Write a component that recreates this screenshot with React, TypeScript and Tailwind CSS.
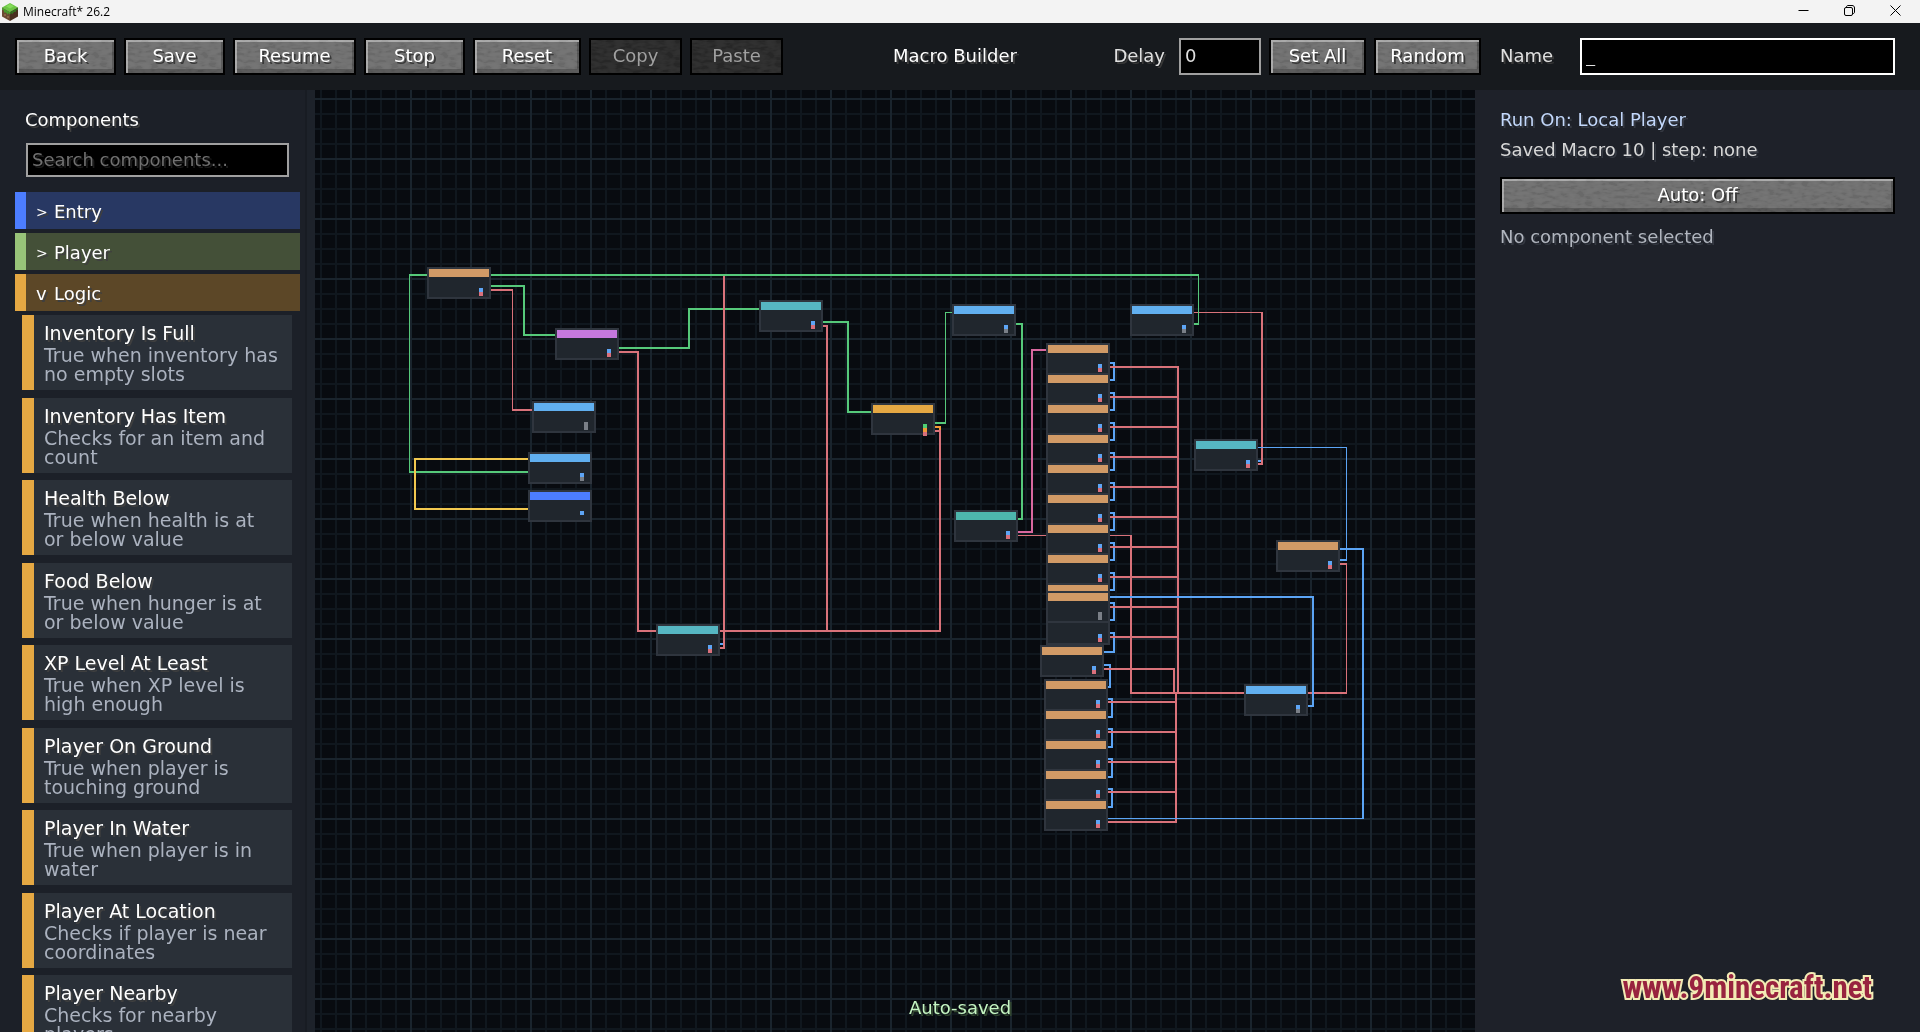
import { useState } from "react";
import clsx from "clsx";

const COLORS = {
  orange: "#d19a66",
  purple: "#c678dd",
  blue: "#61afef",
  entry: "#4c7dff",
  teal: "#56b6c2",
  logic: "#e5a843",
  mint: "#4db6ac",
  portBlue: "#5ea5f5",
  portRed: "#d9707c",
  portGray: "#7a7f87",
  portGreen: "#4fcf74",
  portOrange: "#f29b38",
};

const WIRES = {
  green: "#56c97a",
  red: "#d9727a",
  blue: "#5ba4f5",
  yellow: "#f2c84f",
  pink: "#d9689f",
  orange: "#f29b38",
};

// world coordinates of the canvas' top left corner
const ORIGIN = { x: 315, y: 90 };

interface GraphNode {
  x: number;
  y: number;
  color: string;
  ports: string[];
}

const { portBlue, portRed, portGray, portGreen, portOrange } = COLORS;

const stack = (x: number, y: number, count: number): GraphNode[] =>
  Array.from({ length: count }, (_, i) => ({
    x,
    y: y + i * 30,
    color: COLORS.orange,
    ports: [portBlue, portRed],
  }));

const nodes: GraphNode[] = [
  { x: 427, y: 267, color: COLORS.orange, ports: [portBlue, portRed] },
  { x: 555, y: 328, color: COLORS.purple, ports: [portBlue, portRed] },
  { x: 532, y: 401, color: COLORS.blue, ports: [portGray, portGray] },
  { x: 528, y: 452, color: COLORS.blue, ports: [portBlue, portGray] },
  { x: 528, y: 490, color: COLORS.entry, ports: [portBlue] },
  { x: 759, y: 300, color: COLORS.teal, ports: [portBlue, portRed] },
  { x: 871, y: 403, color: COLORS.logic, ports: [portGreen, portOrange, portRed] },
  { x: 952, y: 304, color: COLORS.blue, ports: [portBlue, portGray] },
  { x: 954, y: 510, color: COLORS.mint, ports: [portBlue, portRed] },
  { x: 656, y: 624, color: COLORS.teal, ports: [portBlue, portRed] },
  ...stack(1046, 343, 10),
  { x: 1046, y: 591, color: COLORS.orange, ports: [portGray, portGray] },
  { x: 1040, y: 645, color: COLORS.orange, ports: [portBlue, portRed] },
  ...stack(1044, 679, 5),
  { x: 1130, y: 304, color: COLORS.blue, ports: [portBlue, portGray] },
  { x: 1194, y: 439, color: COLORS.teal, ports: [portBlue, portRed] },
  { x: 1276, y: 540, color: COLORS.orange, ports: [portBlue, portRed] },
  { x: 1244, y: 684, color: COLORS.blue, ports: [portBlue, portGray] },
];

const repeat = (count: number, draw: (dy: number) => string) =>
  Array.from({ length: count }, (_, i) => draw(i * 30)).join(" ");

const wires: { color: string; d: string; thin?: boolean }[] = [
  { color: WIRES.blue, d: "M720 644 H724 M1258 461 H1262" },
  { color: WIRES.blue, d: repeat(9, (dy) => `M1108 ${363 + dy} H1114 V${380 + dy} H1108`) },
  { color: WIRES.blue, d: "M1108 633 H1114 V652 H1102 M1102 665 H1110 V687 H1106" },
  { color: WIRES.blue, d: repeat(4, (dy) => `M1106 ${699 + dy} H1112 V${717 + dy} H1106`) },
  { color: WIRES.red, d: "M490 290 H513 M512 410 H532" },
  { color: WIRES.red, d: "M512.5 290 V410", thin: true },
  { color: WIRES.red, d: "M618 352 H638 V631 H656 M718 631 H940 M822 326 H827 V631 M934 431 H940 V632" },
  { color: WIRES.red, d: "M1018 535.5 H1131", thin: true },
  { color: WIRES.red, d: "M1131 535 V693 H1347 M1338 564 H1347" },
  { color: WIRES.red, d: "M1346.5 564 V693 M1194 312.5 H1262", thin: true },
  { color: WIRES.red, d: "M1262 312 V464 H1256" },
  { color: WIRES.red, d: repeat(10, (dy) => `M1108 ${367 + dy} H1178`) + " M1178 366 V693" },
  { color: WIRES.red, d: "M1102 669 H1174 V693" },
  { color: WIRES.red, d: repeat(5, (dy) => `M1106 ${702 + dy} H1176`) + " M1176 693 V823" },
  { color: WIRES.green, d: "M427 275 H409 M409 472 H528 M490 275 H1199 M1199 324 H1192" },
  { color: WIRES.green, d: "M409.5 275 V472 M1198.5 275 V324", thin: true },
  { color: WIRES.green, d: "M490 286 H524 V335 H556 M618 348 H689 V309 H760 M822 322 H848 V412 H872" },
  { color: WIRES.green, d: "M934 423 H946 M1014 324 H1022 V519 H1016" },
  { color: WIRES.green, d: "M945.5 423 V312.5 H953", thin: true },
  { color: WIRES.red, d: "M718 648 H724 V276" },
  { color: WIRES.orange, d: "M934 427 H940 V430" },
  { color: WIRES.yellow, d: "M528 459 H415 V509 H528" },
  { color: WIRES.pink, d: "M1016 532 H1032 V350 H1047" },
  { color: WIRES.blue, d: "M1338 560 H1347 M1338 549 H1363 V819 M1108 597 H1313 V706 H1306" },
  { color: WIRES.blue, d: "M1346.5 560 V447.5 H1257 M1363 818.5 H1107", thin: true },
];

const categories = [
  { name: "Entry", open: false, bar: "bg-[#4c7dff]", row: "bg-[#283863]" },
  { name: "Player", open: false, bar: "bg-[#98c379]", row: "bg-[#445038]" },
  { name: "Logic", open: true, bar: "bg-[#e5a843]", row: "bg-[#5c4727]" },
];

const logicComponents = [
  { title: "Inventory Is Full", text: "True when inventory has no empty slots" },
  { title: "Inventory Has Item", text: "Checks for an item and count" },
  { title: "Health Below", text: "True when health is at or\u00a0below value" },
  { title: "Food Below", text: "True when hunger is at or\u00a0below value" },
  { title: "XP Level At Least", text: "True when XP level is high enough" },
  { title: "Player On Ground", text: "True when player is touching ground" },
  { title: "Player In Water", text: "True when player is in water" },
  { title: "Player At Location", text: "Checks if player is near coordinates" },
  { title: "Player Nearby", text: "Checks for nearby players" },
];

interface StoneButtonProps {
  children: React.ReactNode;
  className?: string;
  disabled?: boolean;
}

const StoneButton: React.FC<StoneButtonProps> = ({ children, className, disabled }) => (
  <button
    type="button"
    disabled={disabled}
    className={clsx(
      "relative h-[37px] shrink-0 border-2 border-black pb-0.5 leading-7",
      disabled
        ? "bg-[#2b2b2b] text-[#a0a0a0]"
        : "bg-[#6f6f6f] text-white shadow-[inset_2px_2px_0_#a8a8a8,inset_-2px_-4px_0_#565656] text-shadow-[2px_2px_0_#3a3a3a]",
      className
    )}
  >
    <svg className="absolute inset-0 h-full w-full opacity-10 mix-blend-soft-light" aria-hidden="true">
      <rect width="100%" height="100%" filter="url(#stone)" />
    </svg>
    <span className="relative">{children}</span>
  </button>
);

// grain shared by all the stone buttons
const StoneFilter = () => (
  <svg className="absolute h-0 w-0" aria-hidden="true">
    <filter id="stone" x="0" y="0" width="100%" height="100%">
      <feTurbulence type="fractalNoise" baseFrequency="0.12 0.3" numOctaves="2" seed="4" />
      <feColorMatrix values="3 0 0 0 -1  3 0 0 0 -1  3 0 0 0 -1  0 0 0 0 1" />
    </filter>
  </svg>
);

const TitleBar = () => (
  <header className="flex h-[23px] shrink-0 items-center bg-[#f3f3f3] pl-0.5 pr-0.5 text-black">
    <svg width="16" height="18" viewBox="0 0 16 18" aria-hidden="true">
      <path d="M8 0 16 4.5 8 9 0 4.5Z" fill="#6cc644" />
      <path d="M8 1 12 3.2 8 5.5 4 3.2Z" fill="#86dc5a" />
      <path d="M0 4.5 8 9V18L0 13.5Z" fill="#6b4a33" />
      <path d="M16 4.5 8 9V18L16 13.5Z" fill="#4a2f20" />
      <path d="M0 4.5 8 9V11.5L6 10V12L4 9.5 2 9.5V7.5L0 7Z" fill="#4b9a2f" />
      <path d="M16 4.5 8 9V11.5L10 10V11.5L12 9 14 8.8V7.2L16 7Z" fill="#35701f" />
      <path d="M2 11h2v2H2ZM5 13h2v2H5Z" fill="#8a6547" />
    </svg>
    <h1 className="ml-[5px] grow font-['Open_Sans',sans-serif] text-xs">Minecraft* 26.2</h1>
    <button type="button" aria-label="Minimize" className="flex h-full w-[46px] items-center justify-center">
      <svg width="11" height="11" viewBox="0 0 11 11" fill="none" stroke="currentColor">
        <path d="M0.5 4.5H10.5" />
      </svg>
    </button>
    <button type="button" aria-label="Restore" className="flex h-full w-[46px] items-center justify-center pb-0.5">
      <svg width="11" height="11" viewBox="0 0 11 11" fill="none" stroke="currentColor">
        <rect x="0.5" y="2.5" width="8" height="8" rx="1.5" />
        <path d="M2.5 2C2.5 1 3.2 0.5 4 0.5H8C9.6 0.5 10.5 1.4 10.5 3V7C10.5 8 10 8.5 9 8.5" />
      </svg>
    </button>
    <button type="button" aria-label="Close" className="flex h-full w-[46px] items-center justify-center pb-0.5">
      <svg width="11" height="11" viewBox="0 0 11 11" fill="none" stroke="currentColor">
        <path d="M0.5 0.5 10.5 10.5M10.5 0.5 0.5 10.5" />
      </svg>
    </button>
  </header>
);

const Toolbar = () => {
  const [delay, setDelay] = useState("0");
  const [name, setName] = useState("_");

  return (
    <div className="grid h-[67px] shrink-0 grid-cols-[1fr_auto_1fr] items-start bg-[#171a1e] pt-[15px] pr-[25px] pl-[15px]">
      <div className="flex gap-2">
        <StoneButton className="w-[101px]">Back</StoneButton>
        <StoneButton className="w-[101px]">Save</StoneButton>
        <StoneButton className="w-[123px]">Resume</StoneButton>
        <StoneButton className="w-[101px]">Stop</StoneButton>
        <StoneButton className="w-[108px]">Reset</StoneButton>
        <StoneButton className="w-[93px]" disabled>
          Copy
        </StoneButton>
        <StoneButton className="w-[93px]" disabled>
          Paste
        </StoneButton>
      </div>
      <h2 className="leading-9 text-white text-shadow-[2px_2px_0_#3f3f3f]">Macro Builder</h2>
      <div className="flex items-center justify-end gap-2 text-[#e0e0e0] text-shadow-[2px_2px_0_#383838]">
        <label htmlFor="delay" className="mr-1.5 pb-0.5">
          Delay
        </label>
        <input
          id="delay"
          value={delay}
          onChange={(e) => setDelay(e.target.value)}
          className="h-[37px] w-[82px] border-2 border-[#a0a0a0] bg-black px-1 pb-0.5 outline-none"
        />
        <StoneButton className="w-[97px]">Set All</StoneButton>
        <StoneButton className="w-[107px]">Random</StoneButton>
        <label htmlFor="name" className="ml-[11px] w-[72px] pb-0.5">
          Name
        </label>
        <input
          id="name"
          value={name}
          onChange={(e) => setName(e.target.value)}
          className="h-[37px] w-[315px] border-2 border-white bg-black px-1 pb-0.5 outline-none"
        />
      </div>
    </div>
  );
};

const Sidebar = () => (
  <aside className="flex w-[315px] shrink-0 overflow-hidden bg-[#1c2028]">
    <div className="w-[305px] shrink-0 pt-[15px] pr-[5px] pl-[15px]">
      <label
        htmlFor="search"
        className="block pl-[10px] leading-[30px] text-white text-shadow-[2px_2px_0_#3f3f3f]"
      >
        Components
      </label>
      <input
        id="search"
        type="text"
        placeholder="Search components..."
        className="mt-2 ml-[11px] block h-[34px] w-[263px] border-2 border-[#a0a0a0] bg-black px-1 pb-0.5 outline-none text-shadow-[2px_2px_0_#1c1c1c] placeholder:text-[#707070]"
      />
      <div className="mt-[15px] flex flex-col gap-1">
        {categories.map((category) => (
          <button
            key={category.name}
            type="button"
            aria-expanded={category.open}
            className={clsx(
              "flex h-[37px] items-center text-left text-white text-shadow-[2px_2px_0_#3f3f3f]",
              category.row
            )}
          >
            <span className={clsx("mr-2.5 h-full w-[11px]", category.bar)} />
            <span className={clsx("w-[18px] pt-0.5", !category.open && "text-sm")}>
              {category.open ? "v" : ">"}
            </span>
            <span className="pt-0.5">{category.name}</span>
          </button>
        ))}
      </div>
      <ul className="mt-1 pr-2 pl-[7px] text-[19px]">
        {logicComponents.map((item) => (
          <li key={item.title} className="odd:mb-2 even:mb-[7px]">
            <button
              type="button"
              className="flex h-[75px] w-full flex-col justify-start border-l-[12px] border-[#e5a843] bg-[#2a3038] pt-1.5 pr-3 pl-2.5 text-left"
            >
              <span className="leading-[25px] text-white text-shadow-[2px_2px_0_#3f3f3f]">{item.title}</span>
              <span className="leading-[19px] text-[#abb2bf]">{item.text}</span>
            </button>
          </li>
        ))}
      </ul>
    </div>
    <div className="grow border-l-2 border-[#181c23] bg-[#1d222a]" />
  </aside>
);

const NodeBox: React.FC<{ node: GraphNode }> = ({ node }) => (
  <g transform={`translate(${node.x} ${node.y})`}>
    <rect width="64" height="32" fill="#2f353e" />
    <rect x="2" y="2" width="60" height="28" fill="#20262d" />
    <rect x="2" y="2" width="60" height="8" fill={node.color} />
    {node.ports.map((port, i) => (
      <rect key={i} x="52" y={21 + i * 4} width="4" height="4" fill={port} />
    ))}
  </g>
);

const Canvas = () => (
  <section
    aria-label="Macro graph"
    className="min-w-0 grow overflow-hidden bg-[#080b10] bg-[linear-gradient(to_right,#1a242d_2px,transparent_2px),linear-gradient(to_bottom,#1a242d_2px,transparent_2px),linear-gradient(to_right,#10171e_2px,transparent_2px),linear-gradient(to_bottom,#10171e_2px,transparent_2px)] bg-size-[60px_60px,60px_60px,15px_15px,15px_15px] bg-position-[35px_8px,35px_8px,5px_8px,5px_8px]"
  >
    <svg className="block h-full w-full" shapeRendering="crispEdges">
      <g transform={`translate(${-ORIGIN.x} ${-ORIGIN.y})`}>
        {wires.map((wire, i) => (
          <path key={i} d={wire.d} fill="none" stroke={wire.color} strokeWidth={wire.thin ? 1 : 2} />
        ))}
        {nodes.map((node, i) => (
          <NodeBox key={i} node={node} />
        ))}
      </g>
    </svg>
  </section>
);

const Inspector = () => (
  <aside className="w-[445px] shrink-0 bg-[#1e2129] pt-[15px] pr-[25px] pl-[25px] leading-[30px] text-shadow-[2px_2px_0_#343841]">
    <p className="text-[#c3d8fb]">Run On: Local Player</p>
    <p className="text-[#d8d8d8]">Saved Macro 10 | step: none</p>
    <StoneButton className="mt-3 w-full">Auto: Off</StoneButton>
    <p className="mt-2 text-[#b1b6bf]">No component selected</p>
  </aside>
);

const App = () => (
  <div className="relative flex h-screen flex-col overflow-hidden bg-[#171a1e] font-['DejaVu_Sans',sans-serif] text-lg">
    <StoneFilter />
    <TitleBar />
    <Toolbar />
    <main className="flex min-h-0 grow">
      <Sidebar />
      <Canvas />
      <Inspector />
    </main>
    <p
      role="status"
      className="pointer-events-none absolute inset-x-0 bottom-2.5 text-center text-[#c5f5c2] text-shadow-[2px_2px_0_#31452f]"
    >
      Auto-saved
    </p>
    <a
      href="#"
      className="absolute right-12 bottom-6 font-['Liberation_Sans_Narrow','Roboto_Condensed',sans-serif] text-[31px] leading-10 font-bold text-[#98233f] [-webkit-text-stroke:4px_#f3ebb5] [paint-order:stroke_fill]"
    >
      www.9minecraft.net
    </a>
  </div>
);

export default App;
